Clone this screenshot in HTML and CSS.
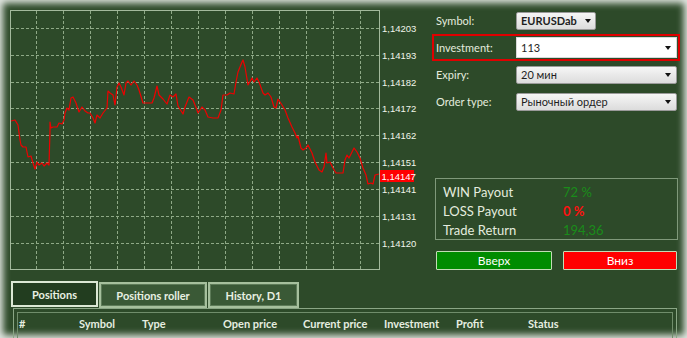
FILE: index.html
```html
<!DOCTYPE html>
<html lang="en">
<head>
  <meta charset="UTF-8" />
  <title>Binary options — EURUSDab</title>
  <link rel="stylesheet" href="styles.css">
</head>
<body>
  <div class="window">

    <div class="top">
      <div class="chart">
        <svg width="410" height="260" viewBox="10 10 410 260">
          <g class="grid">
            <line x1="36.5" y1="11" x2="36.5" y2="269"/>
            <line x1="63.5" y1="11" x2="63.5" y2="269"/>
            <line x1="90.5" y1="11" x2="90.5" y2="269"/>
            <line x1="117.5" y1="11" x2="117.5" y2="269"/>
            <line x1="144.5" y1="11" x2="144.5" y2="269"/>
            <line x1="171.5" y1="11" x2="171.5" y2="269"/>
            <line x1="198.5" y1="11" x2="198.5" y2="269"/>
            <line x1="225.5" y1="11" x2="225.5" y2="269"/>
            <line x1="252.5" y1="11" x2="252.5" y2="269"/>
            <line x1="279.5" y1="11" x2="279.5" y2="269"/>
            <line x1="306.5" y1="11" x2="306.5" y2="269"/>
            <line x1="333.5" y1="11" x2="333.5" y2="269"/>
            <line x1="360.5" y1="11" x2="360.5" y2="269"/>
            <line x1="11" y1="28.5" x2="379" y2="28.5"/>
            <line x1="11" y1="55.5" x2="379" y2="55.5"/>
            <line x1="11" y1="82.5" x2="379" y2="82.5"/>
            <line x1="11" y1="108.5" x2="379" y2="108.5"/>
            <line x1="11" y1="135.5" x2="379" y2="135.5"/>
            <line x1="11" y1="162.5" x2="379" y2="162.5"/>
            <line x1="11" y1="189.5" x2="379" y2="189.5"/>
            <line x1="11" y1="216.5" x2="379" y2="216.5"/>
            <line x1="11" y1="243.5" x2="379" y2="243.5"/>
          </g>
          <rect class="frame" x="10.5" y="10.5" width="369" height="259"/>

          <polyline class="price" points="11,121 15,120 18,125 20,140 21,145 23,147 26,147 28,157 31,156 33,163 35,169 37,162 39,165 42,163 44,166 47,163 49,165 50,130 50,122 51,128 53,127 57,127 59,123 62,124 64,120 65,113 67,108 69,110 71,98 73,97 76,103 79,112 82,107 85,111 88,113 90,113 93,118 95,123 97,115 100,118 103,113 107,108 108,91 110,93 113,95 115,105 117,87 119,83 121,87 124,95 126,83 128,81 131,85 134,81 137,85 139,90 143,103 147,103 152,103 154,98 157,86 159,95 163,99 167,104 170,95 173,97 176,94 178,106 183,114 185,107 189,97 193,100 197,110 198,113 202,107 205,110 208,117 213,118 218,118 221,110 223,95 227,95 230,93 234,94 236,82 238,72 242,62 243,60 245,67 248,85 252,78 254,82 257,78 259,82 263,93 265,95 268,93 271,97 274,107 276,108 278,99 282,105 285,110 288,118 292,127 295,133 297,138 298,136 301,148 303,150 306,148 308,145 312,153 315,162 319,170 322,172 324,167 326,153 327,163 330,162 333,168 336,173 340,173 343,173 345,160 347,155 349,158 352,152 354,148 357,152 360,158 363,168 366,175 368,184 371,183 373,184 375,175 379,174"/>

          <g class="axis">
            <text x="382" y="31.5">1,14203</text>
            <text x="382" y="58.5">1,14193</text>
            <text x="382" y="85.5">1,14182</text>
            <text x="382" y="112">1,14172</text>
            <text x="382" y="139">1,14162</text>
            <text x="382" y="166">1,14151</text>
            <text x="382" y="193">1,14141</text>
            <text x="382" y="220">1,14131</text>
            <text x="382" y="247">1,14120</text>
          </g>
          <rect class="badge" x="380" y="170" width="34" height="12"/>
          <text class="badge-text" x="381.5" y="179.5">1,14147</text>
        </svg>
      </div>

      <div class="side">
        <div class="form">
          <div class="row">
            <span class="lbl">Symbol:</span>
            <div class="combo combo-short"><span class="val val-bold">EURUSDab</span><i class="arrow"></i></div>
          </div>
          <div class="row row-active">
            <span class="lbl">Investment:</span>
            <div class="combo combo-edit"><span class="val">113</span><i class="arrow"></i></div>
          </div>
          <div class="row">
            <span class="lbl">Expiry:</span>
            <div class="combo"><span class="val">20 мин</span><i class="arrow"></i></div>
          </div>
          <div class="row">
            <span class="lbl">Order type:</span>
            <div class="combo"><span class="val">Рыночный ордер</span><i class="arrow"></i></div>
          </div>
        </div>

        <div class="info">
          <div class="info-row"><span class="info-lbl">WIN Payout</span><span class="good">72 %</span></div>
          <div class="info-row"><span class="info-lbl">LOSS Payout</span><span class="bad">0 %</span></div>
          <div class="info-row"><span class="info-lbl">Trade Return</span><span class="good">194,36</span></div>
        </div>

        <div class="buttons">
          <button class="btn btn-up">Вверх</button>
          <button class="btn btn-down">Вниз</button>
        </div>
      </div>
    </div>

    <div class="tabs">
      <div class="tab tab-active">Positions</div>
      <div class="tab tab-roller">Positions roller</div>
      <div class="tab tab-history">History, D1</div>
    </div>

    <div class="table">
      <div class="table-inner">
        <div class="thead">
          <span>#</span>
          <span>Symbol</span>
          <span>Type</span>
          <span>Open price</span>
          <span>Current price</span>
          <span>Investment</span>
          <span>Profit</span>
          <span>Status</span>
        </div>
      </div>
    </div>

  </div>
</body>
</html>
```

FILE: styles.css
```css
html, body {
  margin: 0;
  padding: 0;
  background: #ffffff;
}

.window {
  box-sizing: border-box;
  width: 687px;
  height: 338px;
  overflow: hidden;
  padding: 10px 0 0 10px;
  background: #2d4a29;
  box-shadow: inset 0 0 7px 3px #e6eae5;
  font-family: 'Lato', 'Open Sans', sans-serif;
  color: #e4ecdf;
}

.top {
  display: flex;
  height: 260px;
}

.chart {
  width: 410px;
  height: 260px;
}

.chart svg {
  display: block;
}

.grid line {
  stroke: #8ea986;
  stroke-width: 1;
  stroke-dasharray: 3 2;
}

.frame {
  fill: none;
  stroke: #a3b99c;
  stroke-width: 1;
}

.price {
  fill: none;
  stroke: #ee0000;
  stroke-width: 1.2;
  stroke-linejoin: round;
}

.axis text {
  font-family: 'Liberation Sans', sans-serif;
  font-size: 9.5px;
  fill: #f0f5ea;
}

.badge {
  fill: #ff0000;
}

.badge-text {
  font-family: 'Liberation Sans', sans-serif;
  font-size: 9.5px;
  fill: #ffffff;
}

/* right side */

.side {
  display: flex;
  flex-direction: column;
  width: 248px;
  margin-left: 12px;
  margin-top: -3px;
}

.row {
  box-sizing: border-box;
  display: flex;
  align-items: center;
  height: 27px;
  border: 2px solid transparent;
  padding: 0 1px 0 2px;
}

.row-active {
  border-color: #e00000;
}

.lbl {
  width: 80px;
  font-size: 11px;
}

.combo {
  box-sizing: border-box;
  flex: 1;
  display: flex;
  align-items: center;
  height: 18px;
  padding: 0 5px 0 4px;
  border: 1px solid #9a9a9a;
  border-radius: 2px;
  background: linear-gradient(to bottom, #f6f6f6, #dcdcdc);
  color: #1e1e1e;
  font-size: 11px;
}

.combo-short {
  flex: none;
  width: 80px;
  padding-right: 4px;
}

.combo-edit {
  height: 21px;
  background: #ffffff;
  border-color: #d8d8d8;
  border-radius: 0;
}

.val {
  flex: 1;
}

.val-bold {
  font-weight: 700;
}

.arrow {
  width: 0;
  height: 0;
  border-left: 3.5px solid transparent;
  border-right: 3.5px solid transparent;
  border-top: 4px solid #111111;
}

.info {
  box-sizing: border-box;
  width: 243px;
  height: 62px;
  margin: auto 0 0 3px;
  padding: 3px 0 0 7px;
  border: 1px solid #7f997a;
}

.info-row {
  display: flex;
  height: 19px;
  align-items: center;
  font-size: 13px;
}

.info-lbl {
  width: 120px;
}

.good {
  color: #1a8c1a;
}

.bad {
  color: #ff1010;
  font-weight: 700;
}

.buttons {
  display: flex;
  gap: 11px;
  margin: 11px 0 0 4px;
}

.btn {
  box-sizing: border-box;
  height: 19px;
  padding: 0;
  border: 1px solid #c2ddb5;
  border-radius: 1px;
  font-family: 'Lato', 'Open Sans', sans-serif;
  font-size: 12px;
  color: #ffffff;
}

.btn-up {
  width: 116px;
  background: #008c00;
}

.btn-down {
  width: 114px;
  background: #ff0000;
}

/* tabs */

.tabs {
  display: flex;
  gap: 1px;
  height: 27px;
  margin: 11px 0 0 1px;
}

.tab {
  box-sizing: border-box;
  display: flex;
  align-items: center;
  justify-content: center;
  height: 26px;
  font-size: 11px;
  font-weight: 700;
  color: #e8f0e2;
}

.tab-active {
  width: 87px;
  border: 2px solid #dbe8d4;
  background: #223d1f;
}

.tab-roller,
.tab-history {
  align-self: flex-end;
  border: 2px solid #a6c09d;
  box-shadow: inset 0 0 0 1px #5d7b58;
  background: #3a5936;
}

.tab-roller {
  width: 108px;
}

.tab-history {
  width: 91px;
}

/* table */

.table {
  box-sizing: border-box;
  width: 664px;
  height: 40px;
  margin-left: 3px;
  padding: 3px 3px 0 3px;
  border: 1px solid #8aa685;
}

.table-inner {
  height: 100%;
  border: 1px solid #708d6b;
  border-bottom: none;
}

.thead {
  display: grid;
  grid-template-columns: 60px 63px 81px 80px 81px 72px 72px 1fr;
  padding: 4px 0 0 1px;
  font-size: 11px;
  font-weight: 700;
  color: #e6eee0;
}
```
